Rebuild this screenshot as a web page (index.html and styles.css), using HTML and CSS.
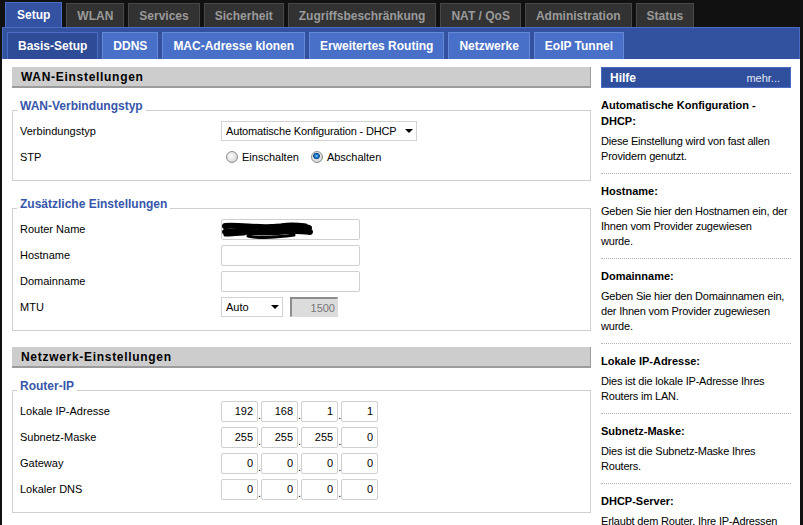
FILE: index.html
```html
<!DOCTYPE html>
<html lang="de">
    <head>
        <meta charset="UTF-8" />
        <title>Basis-Setup</title>
        <link rel="stylesheet" href="styles.css">
    </head>
    <body>
        <div class="page">
            <ul class="tabs">
                <li class="active"><a href="#">Setup</a></li>
                <li><a href="#">WLAN</a></li>
                <li><a href="#">Services</a></li>
                <li><a href="#">Sicherheit</a></li>
                <li><a href="#">Zugriffsbeschränkung</a></li>
                <li><a href="#">NAT / QoS</a></li>
                <li><a href="#">Administration</a></li>
                <li><a href="#">Status</a></li>
            </ul>
            <div class="subnav">
                <ul class="subtabs">
                    <li class="active"><a href="#">Basis-Setup</a></li>
                    <li><a href="#">DDNS</a></li>
                    <li><a href="#">MAC-Adresse klonen</a></li>
                    <li><a href="#">Erweitertes Routing</a></li>
                    <li><a href="#">Netzwerke</a></li>
                    <li><a href="#">EoIP Tunnel</a></li>
                </ul>
            </div>

            <div class="content">
                <div class="main">
                    <h2 class="section-title">WAN-Einstellungen</h2>
                    <fieldset>
                        <legend>WAN-Verbindungstyp</legend>
                        <div class="row">
                            <span class="label">Verbindungstyp</span>
                            <span class="select wide">
                                <select>
                                    <option>Automatische Konfiguration - DHCP</option>
                                </select>
                            </span>
                        </div>
                        <div class="row">
                            <span class="label">STP</span>
                            <label class="radio"><input type="radio" name="stp">Einschalten</label>
                            <label class="radio"><input type="radio" name="stp" checked>Abschalten</label>
                        </div>
                    </fieldset>

                    <fieldset>
                        <legend>Zusätzliche Einstellungen</legend>
                        <div class="row">
                            <span class="label">Router Name</span>
                            <span class="redacted">
                                <input type="text" class="text" value="">
                                <!-- marker over the router name -->
                                <svg class="scribble" width="92" height="18" viewBox="0 0 92 18">
                                    <path d="M3 4 C18 3 34 6 50 5 S76 3 87 6" stroke="#000" stroke-width="6" fill="none" stroke-linecap="round" />
                                    <path d="M3 10 C20 8 38 12 56 10 S80 9 88 10" stroke="#000" stroke-width="6" fill="none" stroke-linecap="round" />
                                    <path d="M3 13 C10 13 16 12 22 12" stroke="#000" stroke-width="3" fill="none" stroke-linecap="round" />
                                    <path d="M26 14 C40 17 56 15 72 13" stroke="#000" stroke-width="3" fill="none" stroke-linecap="round" />
                                    <path d="M60 3 C68 1 76 2 84 3" stroke="#000" stroke-width="3" fill="none" stroke-linecap="round" />
                                </svg>
                            </span>
                        </div>
                        <div class="row">
                            <span class="label">Hostname</span>
                            <input type="text" class="text">
                        </div>
                        <div class="row">
                            <span class="label">Domainname</span>
                            <input type="text" class="text">
                        </div>
                        <div class="row">
                            <span class="label">MTU</span>
                            <span class="select narrow">
                                <select>
                                    <option>Auto</option>
                                    <option>Manuell</option>
                                </select>
                            </span>
                            <input type="text" class="mtu" value="1500" disabled>
                        </div>
                    </fieldset>

                    <h2 class="section-title">Netzwerk-Einstellungen</h2>
                    <fieldset>
                        <legend>Router-IP</legend>
                        <div class="row">
                            <span class="label">Lokale IP-Adresse</span>
                            <span class="ip">
                                <input type="text" value="192">.<input type="text" value="168">.<input type="text" value="1">.<input type="text" value="1">
                            </span>
                        </div>
                        <div class="row">
                            <span class="label">Subnetz-Maske</span>
                            <span class="ip">
                                <input type="text" value="255">.<input type="text" value="255">.<input type="text" value="255">.<input type="text" value="0">
                            </span>
                        </div>
                        <div class="row">
                            <span class="label">Gateway</span>
                            <span class="ip">
                                <input type="text" value="0">.<input type="text" value="0">.<input type="text" value="0">.<input type="text" value="0">
                            </span>
                        </div>
                        <div class="row">
                            <span class="label">Lokaler DNS</span>
                            <span class="ip">
                                <input type="text" value="0">.<input type="text" value="0">.<input type="text" value="0">.<input type="text" value="0">
                            </span>
                        </div>
                    </fieldset>
                </div>

                <div class="help">
                    <div class="help-head">
                        <h3>Hilfe</h3>
                        <a href="#">mehr...</a>
                    </div>
                    <dl>
                        <dt>Automatische Konfiguration - DHCP:</dt>
                        <dd>Diese Einstellung wird von fast allen Providern genutzt.</dd>
                    </dl>
                    <dl>
                        <dt>Hostname:</dt>
                        <dd>Geben Sie hier den Hostnamen ein, der Ihnen vom Provider zugewiesen<br>wurde.</dd>
                    </dl>
                    <dl>
                        <dt>Domainname:</dt>
                        <dd>Geben Sie hier den Domainnamen ein, der Ihnen vom Provider zugewiesen wurde.</dd>
                    </dl>
                    <dl>
                        <dt>Lokale IP-Adresse:</dt>
                        <dd>Dies ist die lokale IP-Adresse Ihres Routers im LAN.</dd>
                    </dl>
                    <dl>
                        <dt>Subnetz-Maske:</dt>
                        <dd>Dies ist die Subnetz-Maske Ihres Routers.</dd>
                    </dl>
                    <dl>
                        <dt>DHCP-Server:</dt>
                        <dd>Erlaubt dem Router, Ihre IP-Adressen zu verwalten.</dd>
                    </dl>
                </div>
            </div>
        </div>
    </body>
</html>
```

FILE: styles.css
```css
body {
    margin: 0;
    background: #111;
    font-family: "Liberation Sans", Arial, sans-serif;
    font-size: 11px;
    color: #000;
}

a {
    text-decoration: none;
    color: inherit;
}

.page {
    width: 798px;
    padding: 2px 0 0 2px;
}

/* top level tabs */

.tabs {
    display: flex;
    align-items: flex-end;
    gap: 4px;
    margin: 0;
    padding: 0 0 0 3px;
    list-style: none;
}

.tabs li {
    height: 23px;
    line-height: 24px;
    padding: 0 10px;
    background: #323232;
    border: 1px solid #484848;
    border-bottom: none;
    color: #9a9a9a;
    font-size: 12px;
    font-weight: bold;
}

.tabs li.active {
    height: 24px;
    line-height: 25px;
    padding: 0 11px;
    background: #3352a2;
    border-color: #4d6fc4;
    color: #fff;
}

/* second level tabs */

.subnav {
    background: #3252a0;
    border: 1px solid #4a6cc2;
    border-bottom: none;
    padding: 4px 0 0 4px;
}

.subtabs {
    display: flex;
    gap: 4px;
    margin: 0;
    padding: 0;
    list-style: none;
}

.subtabs li {
    height: 26px;
    line-height: 27px;
    padding: 0 10px;
    background: #4870c8;
    border: 1px solid #6688d6;
    border-bottom: none;
    color: #fff;
    font-size: 12px;
    font-weight: bold;
}

.subtabs li.active {
    background: #2e4b98;
    border-color: #4a6cc2;
}

/* page body */

.content {
    display: flex;
    gap: 10px;
    background: #fff;
    padding: 8px 9px 0 10px;
    height: 458px;
    overflow: hidden;
}

.main {
    width: 579px;
}

.section-title {
    margin: 0 0 14px;
    height: 19px;
    line-height: 20px;
    padding-left: 9px;
    background: #cdcdcd;
    border-bottom: 2px solid #9c9c9c;
    border-right: 1px solid #9c9c9c;
    font-size: 12px;
    font-weight: bold;
    letter-spacing: 0.7px;
}

fieldset {
    margin: 0 0 16px;
    padding: 0 10px 10px 7px;
    border: 1px solid #cfcfcf;
}

fieldset + fieldset {
    margin-top: 19px;
}

legend {
    margin-left: -3px;
    padding: 0 3px 8px;
    line-height: 8px;
    color: #3656aa;
    font-size: 12px;
    font-weight: bold;
}

.row {
    display: flex;
    align-items: center;
    height: 26px;
}

.row .label {
    width: 201px;
    flex: none;
}

input,
select {
    font: inherit;
    color: #000;
    margin: 0;
}

.select {
    position: relative;
    display: inline-block;
}

.select select {
    appearance: none;
    height: 20px;
    padding: 0 0 0 4px;
    background: #fff;
    border: 1px solid #d2d2d2;
    border-radius: 0;
}

.select::after {
    content: "";
    position: absolute;
    top: 8px;
    right: 4px;
    border-left: 4px solid transparent;
    border-right: 4px solid transparent;
    border-top: 4px solid #000;
    pointer-events: none;
}

.select.wide select {
    width: 196px;
    letter-spacing: -0.15px;
}

.select.narrow select {
    width: 62px;
}

.radio {
    display: inline-flex;
    align-items: center;
    margin-right: 7px;
}

.radio input {
    appearance: none;
    width: 12px;
    height: 12px;
    margin: 0 4px 0 5px;
    border: 1px solid #8e8f8f;
    border-radius: 50%;
    background: radial-gradient(circle at 40% 40%, #fff 0, #e6e6e6 45%, #c4c4c4 100%);
}

.radio input:checked {
    background:
        radial-gradient(circle at 45% 40%, #8fd3ff 0, #1f7fd0 1.5px, #104a8a 3px, transparent 3.6px),
        radial-gradient(circle at 40% 40%, #fff 0, #e6e6e6 45%, #c4c4c4 100%);
}

.text {
    box-sizing: border-box;
    width: 139px;
    height: 21px;
    padding: 0 4px;
    border: 1px solid #cfcfcf;
    border-radius: 2px;
}

.redacted {
    position: relative;
    display: inline-block;
    height: 21px;
}

.scribble {
    position: absolute;
    left: 1px;
    top: 3px;
}

.mtu {
    box-sizing: border-box;
    width: 48px;
    height: 20px;
    margin-left: 7px;
    padding: 0 2px 0 0;
    background: #dcdcdc;
    border: 1px solid #dcdcdc;
    border-top: 2px solid #8c8c8c;
    border-left: 2px solid #8c8c8c;
    color: #777;
    text-align: right;
}

.ip {
    display: inline-flex;
    align-items: flex-end;
    line-height: 14px;
}

.ip input {
    box-sizing: border-box;
    width: 37px;
    height: 21px;
    padding: 0 4px 0 0;
    border: 1px solid #cfcfcf;
    border-radius: 2px;
    text-align: right;
}

/* help column */

.help {
    width: 190px;
}

.help-head {
    display: flex;
    justify-content: space-between;
    align-items: center;
    height: 19px;
    padding: 0 10px 0 8px;
    background: #2f4f9c;
    border: 1px solid #4a6cc2;
    color: #e2e8f5;
}

.help-head h3 {
    margin: 0;
    color: #fff;
    font-size: 12px;
}

.help dl {
    margin: 0;
    padding: 9px 0 9px;
    border-bottom: 1px dotted #b4b4b4;
}

.help dt {
    margin-bottom: 5px;
    line-height: 16px;
    font-weight: bold;
}

.help dd {
    margin: 0;
    line-height: 15px;
    letter-spacing: -0.2px;
}
```
